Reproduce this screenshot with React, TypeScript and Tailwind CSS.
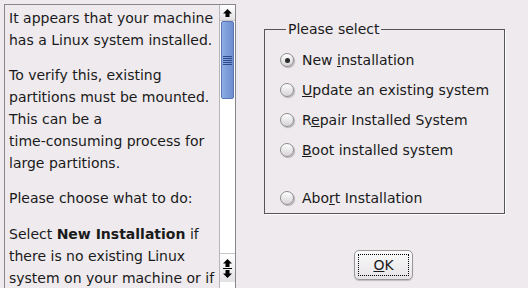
import React from 'react';

const font = "font-['DejaVu_Sans',sans-serif]";

function Radio({ checked }: { checked?: boolean }) {
  return (
    <span className="w-[14px] h-[14px] rounded-full border border-[#8e8e8e] bg-gradient-to-b from-[#ffffff] to-[#d6d3d6] shadow-[1px_1px_1px_rgba(0,0,0,0.25)] flex items-center justify-center shrink-0">
      {checked && <span className="w-[5px] h-[5px] rounded-full bg-[#2a2a2a]" />}
    </span>
  );
}

function Option({ checked, children }: { checked?: boolean; children: React.ReactNode }) {
  return (
    <div className="flex items-center gap-[8px] h-[30px] whitespace-nowrap">
      <Radio checked={checked} />
      <span className="text-[14px] text-[#1a1a1a]">{children}</span>
    </div>
  );
}

function Arrow({ up }: { up?: boolean }) {
  return (
    <svg width="9" height="8" viewBox="0 0 9 8">
      {up ? (
        <path d="M4.5 0 L9 4.5 L6.5 4.5 L6.5 8 L2.5 8 L2.5 4.5 L0 4.5 Z" fill="#000" />
      ) : (
        <path d="M4.5 8 L9 3.5 L6.5 3.5 L6.5 0 L2.5 0 L2.5 3.5 L0 3.5 Z" fill="#000" />
      )}
    </svg>
  );
}

function Scrollbar() {
  return (
    <div className="w-[16px] border-l border-[#b8b5b8] bg-white flex flex-col">
      <div className="h-[16px] bg-gradient-to-b from-white to-[#e4e1e4] border-b border-[#c8c5c8] flex items-center justify-center">
        <Arrow up />
      </div>
      <div className="h-[78px] mx-[1px] bg-gradient-to-r from-[#8eaee6] via-[#7b9cd9] to-[#6f8fcf] border border-[#5a77b3] rounded-[2px] flex flex-col items-center justify-center gap-[1px]">
        {[0, 1, 2, 3, 4].map((i) => (
          <div key={i} className="w-[9px] h-[1px] bg-[#2c4a8a]" />
        ))}
      </div>
      <div className="flex-1" />
      <div className="h-[29px] mb-[11px] border-t border-[#c8c5c8] bg-gradient-to-b from-white to-[#e4e1e4] flex flex-col items-center justify-center gap-[1px]">
        <Arrow up />
        <div className="w-[9px] h-[1px] bg-black" />
        <Arrow />
      </div>
    </div>
  );
}

export default function App() {
  return (
    <div className={`w-[528px] h-[288px] bg-[#eeeaee] overflow-hidden flex ${font} text-[#1a1a1a]`}>
      {/* info text */}
      <div className="ml-[4px] mt-[4px] w-[232px] h-[290px] border border-[#878787] flex shrink-0">
        <div className="flex-1 pl-[4px] pt-[2px] text-[14px] leading-[22px] overflow-hidden">
          <p>It appears that your machine has a Linux system installed.</p>
          <p className="mt-[13px]">
            To verify this, existing partitions must be mounted. This can be a{' '}
            <span className="whitespace-nowrap">time-consuming</span> process for large partitions.
          </p>
          <p className="mt-[13px]">Please choose what to do:</p>
          <p className="mt-[14px]">
            Select <b>New Installation</b> if there is no existing Linux system on your machine or if
          </p>
        </div>
        <Scrollbar />
      </div>

      {/* options */}
      <div className="flex-1 flex flex-col">
        <fieldset className="ml-[28px] mt-[21px] w-[239px] h-[193px] border border-[#555] shadow-[1px_1px_0_#fff] px-[15px] pt-[8px]">
          <legend className="ml-[6px] px-[2px] text-[14px] leading-[16px]">Please select</legend>
          <Option checked>
            New <u>i</u>nstallation
          </Option>
          <Option>
            <u>U</u>pdate an existing system
          </Option>
          <Option>
            R<u>e</u>pair Installed System
          </Option>
          <Option>
            <u>B</u>oot installed system
          </Option>
          <div className="h-[18px]" />
          <Option>
            Abo<u>r</u>t Installation
          </Option>
        </fieldset>
        <div className="mt-[36px] ml-[118px]">
          <button className="w-[59px] h-[30px] rounded-[5px] border border-[#9a979a] bg-gradient-to-b from-[#fbfbfb] to-[#e6e3e6] shadow-[0_1px_1px_rgba(0,0,0,0.2)] p-[3px]">
            <div className="w-full h-full border border-dotted border-black flex items-center justify-center text-[14px]">
              <u>O</u>K
            </div>
          </button>
        </div>
      </div>
    </div>
  );
}
